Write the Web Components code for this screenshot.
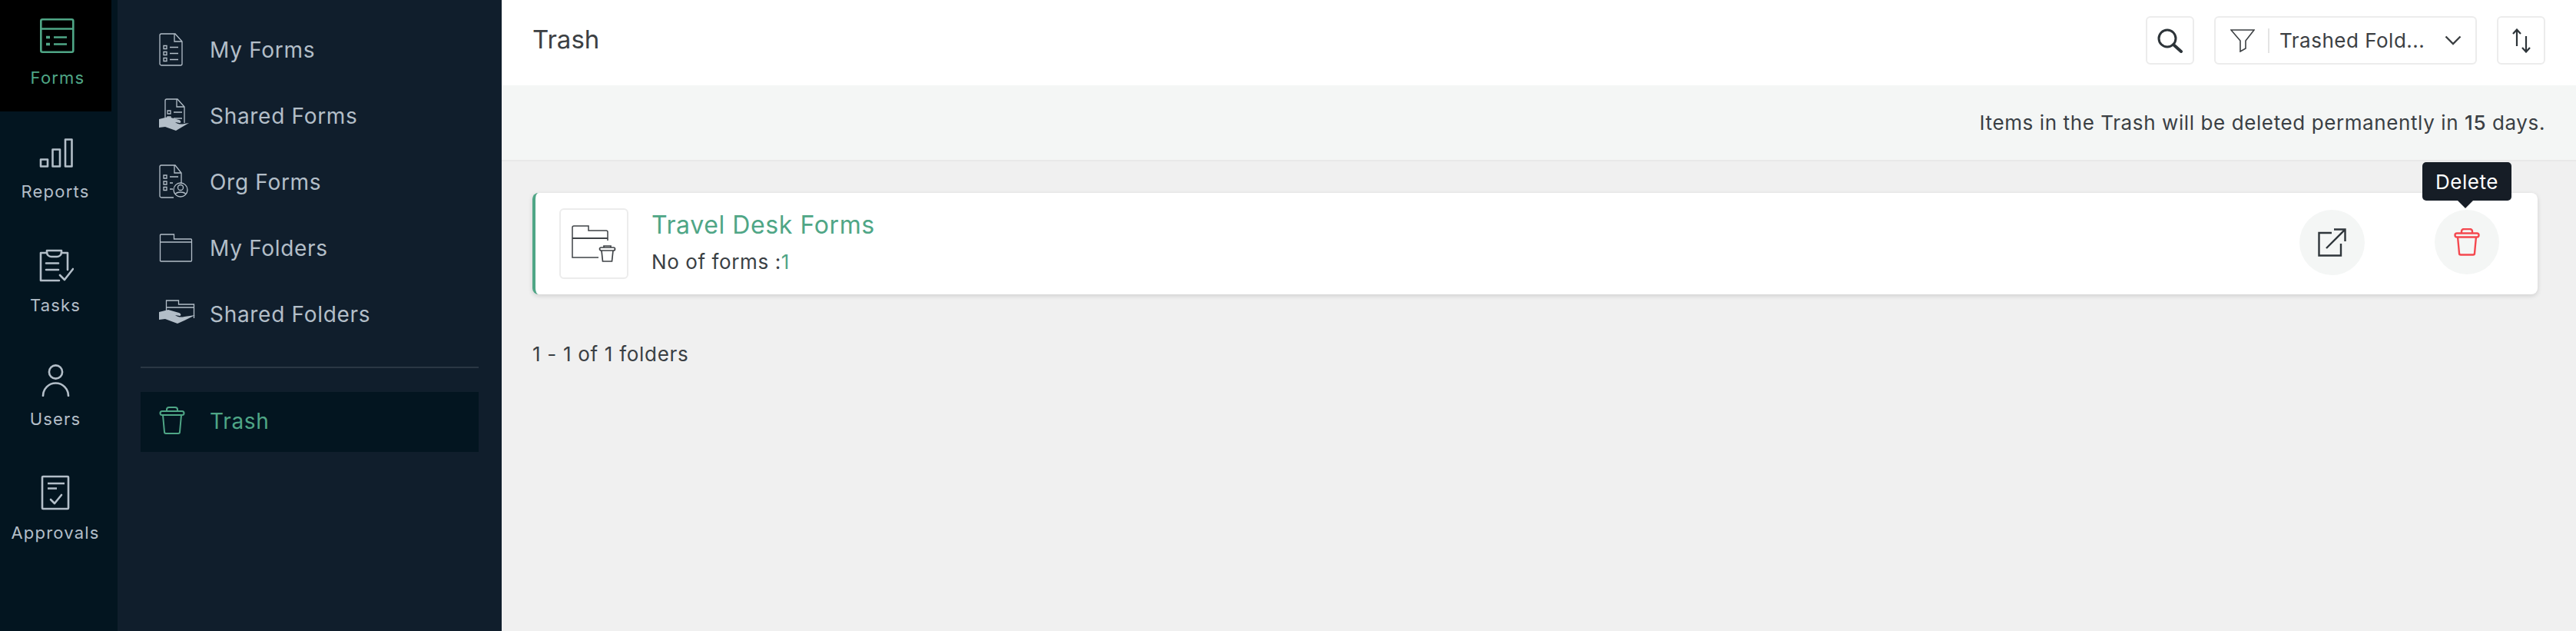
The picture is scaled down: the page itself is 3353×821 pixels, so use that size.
<!DOCTYPE html>
<html>
<head>
<meta charset="utf-8">
<title>Trash</title>
<style>
    html,body{margin:0;height:100%;overflow:hidden;}
    body{font-family:Inter,"Liberation Sans",sans-serif;}
</style>
</head>
<body>
<app-shell>
    <app-rail slot="rail">
        <rail-item active label="Forms">
            <svg width="48" height="48" viewBox="0 0 48 48" fill="none" stroke="currentColor" stroke-width="2.6"><rect x="2.300" y="1.300" width="42" height="42.500" rx="2"/><path d="M2 13.500h43M19 24.500h17M19 33.500h17"/><path d="M9 24.500h5M9 33.500h5" stroke-width="3.600"/></svg>
        </rail-item>
        <rail-item label="Reports">
            <svg width="48" height="40" viewBox="0 0 48 40" fill="none" stroke="currentColor" stroke-width="2.600" stroke-linejoin="round"><rect x="5" y="27.500" width="9" height="9"/><rect x="20.500" y="14.500" width="9.500" height="22"/><rect x="37" y="1.500" width="8.500" height="35"/></svg>
        </rail-item>
        <rail-item label="Tasks">
            <svg width="48" height="44" viewBox="0 0 48 44" fill="none" stroke="currentColor" stroke-width="2.600" stroke-linecap="round" stroke-linejoin="round"><path d="M13 5H5v36h24M32 5h8v22"/><path d="M13 2h19v3a6 6 0 0 1-6 5h-7a6 6 0 0 1-6-5z"/><path d="M12 18.500h16M12 27h16"/><path d="M30 34l6 6 11-14"/></svg>
        </rail-item>
        <rail-item label="Users">
            <svg width="48" height="42" viewBox="0 0 48 42" fill="none" stroke="currentColor" stroke-width="2.600" stroke-linecap="round"><circle cx="24.500" cy="10" r="8.600"/><path d="M8 41a16.500 16.500 0 0 1 33 0"/></svg>
        </rail-item>
        <rail-item label="Approvals">
            <svg width="48" height="46" viewBox="0 0 48 46" fill="none" stroke="currentColor" stroke-width="2.600" stroke-linejoin="round"><rect x="7" y="2" width="34" height="42" rx="1"/><path d="M14 11h22M14 17.500h12"/><path d="M18 32l5 5 9-11" stroke-linecap="round"/></svg>
        </rail-item>
    </app-rail>

    <side-nav slot="nav">
        <nav-item label="My Forms">
            <svg width="54" height="44" viewBox="0 0 54 44" fill="none" stroke="currentColor" stroke-width="1.300"><path d="M3 1h18l9 10v29a2 2 0 0 1-2 2H3a2 2 0 0 1-2-2V3a2 2 0 0 1 2-2z"/><path d="M20 1v10h10"/><path d="M6 16.500h4v4H6zM6 24.500h4v4H6zM6 32.500h4v4H6zM14 18.500h11M14 26.500h11M14 34.500h11"/></svg>
        </nav-item>
        <nav-item label="Shared Forms">
            <svg width="54" height="46" viewBox="0 0 54 46" fill="none" stroke="currentColor" stroke-width="1.300"><path d="M8 25V3a2 2 0 0 1 2-2h14l9 10v21"/><path d="M23 1v10h10"/><path d="M11 16h4v4h-4zM11 24h4v4h-4zM19 18h11M19 26h11"/><path d="M0 27l12-3 14 4c3 1 3 4 1 4l-6-1c4 3 8 3 12 2l6-1-12 7-5 3-14-5-8 1z" fill="currentColor" stroke="none"/></svg>
        </nav-item>
        <nav-item label="Org Forms">
            <svg width="54" height="46" viewBox="0 0 54 46" fill="none" stroke="currentColor" stroke-width="1.300"><path d="M19 43H3a2 2 0 0 1-2-2V3a2 2 0 0 1 2-2h18l8 10v14"/><path d="M20 1v10h9"/><path d="M6 14h4v4H6zM6 22h4v4H6zM6 29.500h4v4H6zM14 16h11M14 24h4M14 32h4"/><circle cx="28" cy="33" r="9"/><circle cx="28" cy="30" r="3.500"/><path d="M21 39c2-4 12-4 14 0"/></svg>
        </nav-item>
        <nav-item label="My Folders">
            <svg width="54" height="38" viewBox="0 0 54 38" fill="none" stroke="currentColor" stroke-width="1.300"><path d="M1.500 36V2a1 1 0 0 1 1-1h17v6h22a1 1 0 0 1 1 1v27a1 1 0 0 1-1 1h-39a1 1 0 0 1-1-1zM1.500 11h40.500"/></svg>
        </nav-item>
        <nav-item label="Shared Folders">
            <svg width="54" height="38" viewBox="0 0 54 38" fill="none" stroke="currentColor" stroke-width="1.300"><path d="M9.500 15V1h16v5h20v18M9.500 10h36"/><path d="M0 16l12-3 14 4c3 1 3 4 1 4l-6-1c4 3 8 3 12 2l14-2-14 7-9 4-16-6-8 1z" fill="currentColor" stroke="none"/></svg>
        </nav-item>
        <hr-line></hr-line>
        <nav-item active label="Trash">
            <svg width="54" height="38" viewBox="0 0 54 38" fill="none" stroke="currentColor" stroke-width="2" stroke-linejoin="round"><rect x="1.500" y="6" width="31" height="5" rx="2.500"/><path d="M10 6V4a3 3 0 0 1 3-3h8a3 3 0 0 1 3 3v2M5 11l2 22a2 2 0 0 0 2 2h16a2 2 0 0 0 2-2l2-22"/></svg>
        </nav-item>
    </side-nav>

    <top-bar slot="top" heading="Trash"></top-bar>
    <notice-bar slot="top">Items in the Trash will be deleted permanently in <b>15</b> days.</notice-bar>

    <folder-card name="Travel Desk Forms" count="1"></folder-card>
    <page-count>1 - 1 of 1 folders</page-count>
</app-shell>

<template id="app-shell-tpl">
    <style>
        :host{display:flex;width:100%;height:821px;background:#f0f0f0;color:#3a3f44;}
        .body{flex:1;min-width:0;display:flex;flex-direction:column;}
        .content{padding:41px 50px 0 40px;display:flex;flex-direction:column;}
    </style>
    <slot name="rail"></slot>
    <slot name="nav"></slot>
    <div class="body">
        <slot name="top"></slot>
        <div class="content"><slot></slot></div>
    </div>
</template>

<template id="app-rail-tpl">
    <style>
        :host{display:flex;flex-direction:column;width:153px;flex:none;background:#031520;}
    </style>
    <slot></slot>
</template>

<template id="rail-item-tpl">
    <style>
        :host{display:flex;flex-direction:column;align-items:center;height:148px;box-sizing:border-box;color:#b3bec8;font-size:22px;letter-spacing:1.200px;padding-right:9px;}
        .ico{height:46px;margin-top:26px;display:flex;align-items:flex-end;justify-content:center;}
        .lbl{margin-top:16px;line-height:26px;}
        :host([active]){background:#000;color:#4fa686;height:145px;width:145px;padding-right:0;padding-left:5px;margin-bottom:3px;}
    </style>
    <div class="ico"><slot></slot></div>
    <div class="lbl"></div>
</template>

<template id="side-nav-tpl">
    <style>
        :host{display:flex;flex-direction:column;width:500px;flex:none;box-sizing:border-box;background:#101e2c;padding:22px 30px 0;}
    </style>
    <slot></slot>
</template>

<template id="nav-item-tpl">
    <style>
        :host{display:flex;align-items:center;height:86px;padding-left:24px;color:#b3bec8;font-size:28px;letter-spacing:.7px;}
        .ico{width:66px;flex:none;display:flex;align-items:center;}
        :host([active]){background:#031520;color:#4fa686;height:78px;box-sizing:border-box;padding-bottom:3px;}
    </style>
    <div class="ico"><slot></slot></div>
    <div class="lbl"></div>
</template>

<template id="hr-line-tpl">
    <style>
        :host{display:block;height:2px;background:#2a3744;margin:25px 0 31px;}
    </style>
</template>

<template id="top-bar-tpl">
    <style>
        :host{display:flex;align-items:center;height:111px;flex:none;box-sizing:border-box;background:#fff;padding:0 40px 6px 40px;}
        h1{margin:0 0 3px;flex:1;font-size:33px;font-weight:400;color:#3c4043;}
        .btn{height:63px;box-sizing:border-box;border:2px solid #ececec;border-radius:6px;display:flex;align-items:center;justify-content:center;color:#2d3439;}
        .sq{width:63px;}
        .sel{width:342px;margin:0 26px 0 26px;font-size:26px;letter-spacing:.5px;color:#3c4043;padding:0 18px 0 19px;justify-content:flex-start;}
        .sep{width:2px;height:32px;background:#e4e4e4;margin:0 13px 0 17px;}
        .sel span{flex:1;white-space:nowrap;}
    </style>
    <h1></h1>
    <div class="btn sq">
        <svg width="34" height="32" viewBox="0 0 34 32" fill="none" stroke="currentColor" stroke-width="3" stroke-linecap="round"><circle cx="13" cy="13" r="11"/><path d="M21 21l10 9" stroke-width="4"/></svg>
    </div>
    <div class="btn sel">
        <svg width="32" height="30" viewBox="0 0 32 30" fill="none" stroke="#3c4043" stroke-width="1.600"><path d="M1 1h30L20 15v10l-7 4V15z"/></svg>
        <div class="sep"></div>
        <span>Trashed Fold...</span>
        <svg width="22" height="13" viewBox="0 0 22 13" fill="none" stroke="currentColor" stroke-width="2.400"><path d="M1.500 1.500L11 11l9.500-9.500"/></svg>
    </div>
    <div class="btn sq">
        <svg width="24" height="32" viewBox="0 0 24 32" fill="none" stroke="currentColor" stroke-width="2.200"><path d="M6 23V1.500M1 7l5-5.500L11 7M18 10v20.500M13 25l5 5.500 5-5.500"/></svg>
    </div>
</template>

<template id="notice-bar-tpl">
    <style>
        :host{display:block;height:99px;flex:none;box-sizing:border-box;background:#f4f6f5;border-bottom:2px solid #e9e9e9;padding:0 40px 0 0;text-align:right;line-height:97px;font-size:26px;letter-spacing:.6px;color:#3a3f44;}
        ::slotted(b){font-weight:500;}
    </style>
    <slot></slot>
</template>

<template id="folder-card-tpl">
    <style>
        :host{display:flex;align-items:center;height:132px;box-sizing:border-box;background:#fff;border-left:4px solid #4fa686;border-radius:8px;box-shadow:0 2px 6px rgba(0,0,0,.14);padding-left:31px;position:relative;}
        .thumb{width:90px;height:92px;box-sizing:border-box;border:2px solid #ececec;border-radius:6px;display:flex;align-items:center;justify-content:center;flex:none;color:#3f4347;}
        .txt{flex:1;margin-left:30px;}
        .name{font-size:32px;color:#4fa686;letter-spacing:.6px;line-height:40px;margin-top:-2px;}
        .count{font-size:26px;color:#3a3f44;letter-spacing:.6px;line-height:36px;margin-top:10px;}
        .count span{color:#4fa686;}
        .act{width:85px;height:85px;border-radius:50%;background:#f4f6f5;display:flex;align-items:center;justify-content:center;flex:none;position:relative;margin-bottom:4px;}
        .open{margin-right:91px;color:#2f363b;}
        .del{width:84px;height:84px;margin-right:50px;color:#f4484f;}
        .tip{position:absolute;left:-16px;top:-62px;width:116px;height:50px;background:#161d26;color:#fff;border-radius:5px;font-size:26px;letter-spacing:.5px;display:flex;align-items:center;justify-content:center;}
        .tip:after{content:"";position:absolute;left:46px;bottom:-10px;border-left:10px solid transparent;border-right:10px solid transparent;border-top:10px solid #161d26;}
    </style>
    <div class="thumb">
        <svg width="60" height="48" viewBox="0 0 60 48" fill="none" stroke="currentColor" stroke-width="1.500"><path d="M36 42H2V3a2 2 0 0 1 2-2h19v6h23a2 2 0 0 1 2 2v11"/><path d="M2 17h46" stroke-width="2.200"/><g transform="translate(37 25)"><rect x="0.500" y="4" width="20" height="4" rx="2" stroke-width="1.700"/><path d="M6 4V2h9v2M3 8l1.500 14h12L18 8" stroke-width="1.700"/></g></svg>
    </div>
    <div class="txt">
        <div class="name"></div>
        <div class="count">No of forms :<span></span></div>
    </div>
    <div class="act open">
        <svg width="37" height="37" viewBox="0 0 37 37" fill="none" stroke="currentColor" stroke-width="2.400"><path d="M18 6H1.500v29.500H30V20"/><path d="M11 26L35 2M21 1.500h14.500V17"/></svg>
    </div>
    <div class="act del">
        <svg width="34" height="36" viewBox="0 0 34 36" fill="none" stroke="currentColor" stroke-width="2.400" stroke-linejoin="round"><rect x="1.500" y="6.500" width="31" height="5" rx="2.500"/><path d="M10 6V4a3 3 0 0 1 3-3h8a3 3 0 0 1 3 3v2M5 11l2 21.500a2 2 0 0 0 2 2h16a2 2 0 0 0 2-2l2-21.500"/></svg>
        <div class="tip">Delete</div>
    </div>
</template>

<template id="page-count-tpl">
    <style>
        :host{display:block;margin-top:60px;font-size:26px;letter-spacing:.7px;line-height:36px;color:#3a3f44;}
    </style>
    <slot></slot>
</template>

<script>
    class Base extends HTMLElement{
        constructor(){
            super();
            const tpl = document.getElementById(this.localName + '-tpl');
            this.attachShadow({mode:'open'}).appendChild(tpl.content.cloneNode(true));
        }
        $(sel){return this.shadowRoot.querySelector(sel)}
    }

    class AppShell extends Base{}
    class AppRail extends Base{}
    class SideNav extends Base{}
    class HrLine extends Base{}
    class NoticeBar extends Base{}
    class PageCount extends Base{}

    class RailItem extends Base{
        connectedCallback(){this.$('.lbl').textContent = this.getAttribute('label')}
    }
    class NavItem extends Base{
        connectedCallback(){this.$('.lbl').textContent = this.getAttribute('label')}
    }
    class TopBar extends Base{
        connectedCallback(){this.$('h1').textContent = this.getAttribute('heading')}
    }
    class FolderCard extends Base{
        connectedCallback(){
            this.$('.name').textContent = this.getAttribute('name');
            this.$('.count span').textContent = this.getAttribute('count');
        }
    }

    customElements.define('app-shell',AppShell);
    customElements.define('app-rail',AppRail);
    customElements.define('rail-item',RailItem);
    customElements.define('side-nav',SideNav);
    customElements.define('nav-item',NavItem);
    customElements.define('hr-line',HrLine);
    customElements.define('top-bar',TopBar);
    customElements.define('notice-bar',NoticeBar);
    customElements.define('folder-card',FolderCard);
    customElements.define('page-count',PageCount);
</script>
</body>
</html>
